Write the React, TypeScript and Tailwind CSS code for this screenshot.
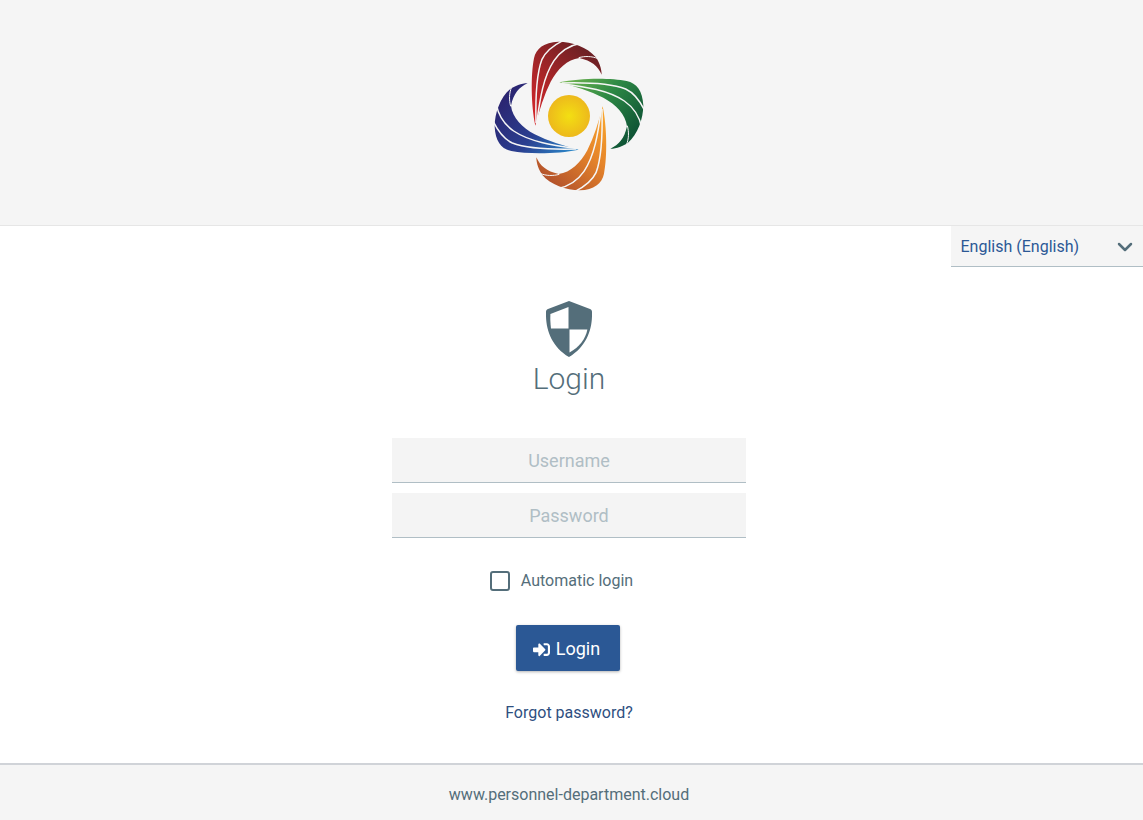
import { ChevronDown } from 'lucide-react';
import { FaSignInAlt } from 'react-icons/fa';

const blades = [
  { id: 'red', angle: 0, from: '#d4262a', mid: '#a82528', to: '#6a2024' },
  { id: 'green', angle: 90, from: '#6fb44f', mid: '#2f8a45', to: '#0d5235' },
  { id: 'orange', angle: 180, from: '#f9a52c', mid: '#e5842a', to: '#b3522b' },
  { id: 'blue', angle: 270, from: '#2c86c8', mid: '#2a3f90', to: '#2b2470' },
];

function Logo() {
  return (
    <svg viewBox="0 0 540 510" className="w-[180px] h-[170px]">
      <defs>
        {blades.map((b) => (
          <linearGradient key={b.id} id={b.id} gradientUnits="userSpaceOnUse" x1="165" y1="270" x2="340" y2="70">
            <stop offset="0" stopColor={b.from} />
            <stop offset="0.45" stopColor={b.mid} />
            <stop offset="1" stopColor={b.to} />
          </linearGradient>
        ))}
        <radialGradient id="sun">
          <stop offset="0" stopColor="#f3df12" />
          <stop offset="1" stopColor="#edb91c" />
        </radialGradient>
      </defs>
      {blades.map((b) => (
        <g key={b.id} transform={`rotate(${b.angle} 267 258)`}>
          <path
            fill={`url(#${b.id})`}
            d="M166 287 C153 225 152 135 162 85 C168 55 192 37 235 35 C275 35 323 52 347 81 C357 95 365 115 365 134 C353 108 335 92 298 84 C262 88 232 118 212 155 C192 195 178 240 166 287 Z"
          />
          <path
            fill="none"
            stroke="#f5f5f5"
            strokeWidth="4.5"
            d="M168 280 C166 200 168 135 186 88 C198 62 222 45 250 31"
          />
          <path
            fill="none"
            stroke="#f5f5f5"
            strokeWidth="4.5"
            d="M170 280 C180 205 190 140 222 92 C240 66 265 47 302 40"
          />
          <path fill="none" stroke="#f5f5f5" strokeWidth="3" d="M296 83 C315 78 335 78 354 86" />
        </g>
      ))}
      <circle cx="267" cy="258" r="63" fill="url(#sun)" />
    </svg>
  );
}

function Shield() {
  return (
    <svg viewBox="0 0 46 56" className="w-[46px] h-[56px]">
      <path fill="#546e7a" d="M23 0 L44 8 C45.5 8.6 46 9.5 46 11 C46.5 28 41 45 23 56 C5 45 -0.5 28 0 11 C0 9.5 0.5 8.6 2 8 Z" />
      <path fill="#ffffff" d="M22.5 6 V27.5 H5 C4.3 22 4.2 18 4.4 13 Z" />
      <path fill="#ffffff" d="M23.5 28.5 H41.4 C39.5 38 33.5 46 23.5 51.5 Z" />
    </svg>
  );
}

export default function App() {
  return (
    <div className="h-[820px] flex flex-col bg-white text-[#546e7a]" style={{ fontFamily: 'Roboto, sans-serif' }}>
      <header className="h-[226px] flex-none bg-[#f5f5f5] border-b border-[#e6e6e6] flex justify-center pt-[30px] pr-[3px]">
        <Logo />
      </header>

      <main className="flex-1 flex flex-col">
        <div className="flex justify-end">
          <div className="w-[192px] h-[41px] bg-[#f5f5f5] border-b border-[#b0bec5] flex items-center justify-between pl-[9.5px] pr-[6px]">
            <span className="text-base text-[#2b5895] mt-[2px]">English (English)</span>
            <ChevronDown className="w-6 h-6 mt-[2px] text-[#546e7a]" strokeWidth={2.5} />
          </div>
        </div>

        <div className="flex flex-col items-center pt-[34px] pr-[5px]">
          <Shield />
          <h1 className="text-[30px] leading-[40px] font-light mt-[2px]">Login</h1>

          <form className="w-[354px] mt-[39px] flex flex-col gap-[10px]">
            <input
              placeholder="Username"
              className="h-[45px] bg-[#f4f4f4] border-b border-[#b0bec5] text-center text-lg outline-none placeholder:text-[#b0bec5]"
            />
            <input
              placeholder="Password"
              type="password"
              className="h-[45px] bg-[#f4f4f4] border-b border-[#b0bec5] text-center text-lg outline-none placeholder:text-[#b0bec5]"
            />
          </form>

          <label className="flex items-center gap-[11px] mt-[33px] -ml-[15px]">
            <span className="w-[20px] h-[20px] border-2 border-[#546e7a] rounded-[3px]" />
            <span className="text-base leading-[20px]">Automatic login</span>
          </label>

          <button className="w-[104px] h-[46px] mt-[34px] pt-[2px] pr-[2px] bg-[#2b5895] text-white text-lg rounded-[2px] shadow-[0_1px_3px_rgba(0,0,0,0.3)] flex items-center justify-center gap-[6px] -ml-[3px]">
            <FaSignInAlt className="w-[17px] h-[17px]" />
            Login
          </button>

          <a className="text-base text-[#2f4f7f] mt-[32px] leading-[20px]">Forgot password?</a>
        </div>
      </main>

      <footer className="h-[57px] flex-none bg-[#f5f5f5] border-t-2 border-[#d0d3d8] flex items-center justify-center text-base pt-[4px] pr-[5px]">
        www.personnel-department.cloud
      </footer>
    </div>
  );
}
